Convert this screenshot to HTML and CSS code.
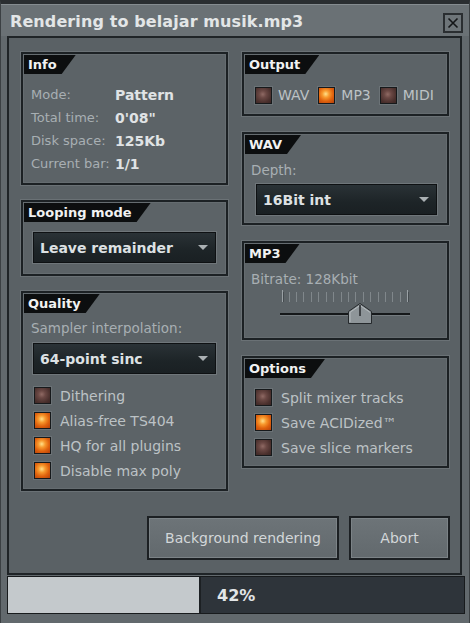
FILE: index.html
```html
<!DOCTYPE html>
<html>
<head>
<meta charset="utf-8">
<link rel="stylesheet" href="styles.css">
</head>
<body>
<div class="window">
  <div class="titlebar">
    <span class="title">Rendering to belajar musik.mp3</span>
    <span class="close"><svg width="16" height="16" viewBox="0 0 16 16"><path d="M3.5 3.5 L12.5 12.5 M12.5 3.5 L3.5 12.5" stroke="#141618" stroke-width="1.6" fill="none"/></svg></span>
  </div>
  <div class="frame">
    <div class="columns">
      <div class="col col-left">
        <section class="panel panel-info">
          <div class="tab">Info</div>
          <div class="info-grid">
            <span class="lbl">Mode:</span><span class="val">Pattern</span>
            <span class="lbl">Total time:</span><span class="val">0'08"</span>
            <span class="lbl">Disk space:</span><span class="val">125Kb</span>
            <span class="lbl">Current bar:</span><span class="val">1/1</span>
          </div>
        </section>
        <section class="panel panel-loop">
          <div class="tab">Looping mode</div>
          <div class="select select-left">Leave remainder<span class="arrow"></span></div>
        </section>
        <section class="panel panel-quality">
          <div class="tab">Quality</div>
          <div class="field-label ql">Sampler interpolation:</div>
          <div class="select select-left">64-point sinc<span class="arrow"></span></div>
          <ul class="checklist ql-list">
            <li><span class="cb"></span>Dithering</li>
            <li><span class="cb on"></span>Alias-free TS404</li>
            <li><span class="cb on"></span>HQ for all plugins</li>
            <li><span class="cb on"></span>Disable max poly</li>
          </ul>
        </section>
      </div>
      <div class="col col-right">
        <section class="panel panel-output">
          <div class="tab">Output</div>
          <div class="out-row">
            <span class="out-item"><span class="cb"></span>WAV</span>
            <span class="out-item"><span class="cb on"></span>MP3</span>
            <span class="out-item"><span class="cb"></span>MIDI</span>
          </div>
        </section>
        <section class="panel panel-wav">
          <div class="tab">WAV</div>
          <div class="field-label wl">Depth:</div>
          <div class="select select-wav">16Bit int<span class="arrow"></span></div>
        </section>
        <section class="panel panel-mp3">
          <div class="tab">MP3</div>
          <div class="field-label wl">Bitrate: 128Kbit</div>
          <svg class="slider" width="136" height="40" viewBox="0 0 136 40">
            <g stroke-width="1">
              <line x1="4.5" y1="2" x2="4.5" y2="14" stroke="#9aa1a5"/>
              <line x1="11.5" y1="4" x2="11.5" y2="14" stroke="#80878b"/>
              <line x1="18.5" y1="4" x2="18.5" y2="14" stroke="#80878b"/>
              <line x1="25.5" y1="4" x2="25.5" y2="14" stroke="#80878b"/>
              <line x1="33.5" y1="4" x2="33.5" y2="14" stroke="#80878b"/>
              <line x1="40.5" y1="4" x2="40.5" y2="14" stroke="#80878b"/>
              <line x1="48.5" y1="4" x2="48.5" y2="14" stroke="#80878b"/>
              <line x1="55.5" y1="4" x2="55.5" y2="14" stroke="#80878b"/>
              <line x1="63.5" y1="4" x2="63.5" y2="14" stroke="#80878b"/>
              <line x1="70.5" y1="4" x2="70.5" y2="14" stroke="#80878b"/>
              <line x1="77.5" y1="4" x2="77.5" y2="14" stroke="#80878b"/>
              <line x1="85.5" y1="4" x2="85.5" y2="14" stroke="#80878b"/>
              <line x1="92.5" y1="4" x2="92.5" y2="14" stroke="#80878b"/>
              <line x1="100.5" y1="4" x2="100.5" y2="14" stroke="#80878b"/>
              <line x1="107.5" y1="4" x2="107.5" y2="14" stroke="#80878b"/>
              <line x1="114.5" y1="4" x2="114.5" y2="14" stroke="#80878b"/>
              <line x1="122.5" y1="4" x2="122.5" y2="14" stroke="#80878b"/>
              <line x1="129.5" y1="2" x2="129.5" y2="14" stroke="#9aa1a5"/>
            </g>
            <g stroke-width="1">
              <line x1="5.5" y1="4" x2="5.5" y2="14" stroke="#454b4f"/>
              <line x1="130.5" y1="4" x2="130.5" y2="14" stroke="#454b4f"/>
            </g>
            <rect x="2" y="25" width="130" height="2" fill="#15181a"/>
            <rect x="2" y="27" width="130" height="1" fill="#747b7f"/>
            <path d="M70.5 35.5 L70.5 23.5 L82 15.5 L93.5 23.5 L93.5 35.5 Z" fill="#8e9599" stroke="#25292c" stroke-width="1"/>
            <path d="M72 34 L72 24.3 L82 17.4 L92 24.3" fill="none" stroke="#b4babd" stroke-width="1"/>
            <line x1="82" y1="17" x2="82" y2="28" stroke="#25292c" stroke-width="1.5"/>
          </svg>
        </section>
        <section class="panel panel-options">
          <div class="tab">Options</div>
          <ul class="checklist op-list">
            <li><span class="cb"></span>Split mixer tracks</li>
            <li><span class="cb on"></span>Save ACIDized™</li>
            <li><span class="cb"></span>Save slice markers</li>
          </ul>
        </section>
      </div>
    </div>
    <div class="buttons">
      <button class="btn btn-bg">Background rendering</button>
      <button class="btn btn-abort">Abort</button>
    </div>
  </div>
  <div class="progress">
    <div class="fill" style="width:193px"></div>
    <span class="pct">42%</span>
  </div>
</div>
</body>
</html>
```
FILE: styles.css
```css
* { box-sizing: border-box; }
html, body { margin: 0; padding: 0; }
body {
  background: #5f666a;
  font-family: "DejaVu Sans", Verdana, sans-serif;
}
.window {
  width: 470px;
  height: 623px;
  background: #62696d;
  border-top: 4px solid #2a2e31;
  border-left: 1px solid #3b4043;
  border-right: 1px solid #3b4043;
  overflow: hidden;
}
.titlebar {
  height: 32px;
  display: flex;
  justify-content: space-between;
  align-items: flex-start;
  padding: 0 6px 0 9px;
  background: #6a7175;
  border-top: 1px solid #858c90;
}
.title {
  font-weight: bold;
  font-size: 16px;
  color: #e3e6e7;
  line-height: 18px;
  margin-top: 8px;
  letter-spacing: 0.1px;
}
.close {
  width: 20px;
  height: 20px;
  margin-top: 8px;
  border: 2px solid #2a2e31;
  background: #6e7579;
  display: flex;
  align-items: center;
  justify-content: center;
}
.close svg { display: block; }
.frame {
  margin-left: 6px;
  width: 455px;
  height: 539px;
  border: 2px solid #1f2427;
  background: #5a6165;
  padding: 14px 9px 13px 12px;
  display: flex;
  flex-direction: column;
}
.columns {
  display: flex;
  gap: 14px;
  height: 439px;
}
.col {
  width: 207px;
  display: flex;
  flex-direction: column;
}
.col-left { gap: 15px; }
.col-right { gap: 16px; }
.panel {
  border: 2px solid #1c2124;
  background: #5c6367;
  box-shadow: 0 0 0 1px #6a7175, inset 0 0 0 1px #656c70;
  padding: 1px;
}
.panel-info { height: 133px; }
.panel-loop { height: 76px; }
.panel-quality { height: 200px; }
.panel-output { height: 64px; }
.panel-wav { height: 93px; }
.panel-mp3 { height: 99px; }
.panel-options { height: 112px; }
.tab {
  display: inline-block;
  height: 19px;
  line-height: 19px;
  background: #0c0e0f;
  color: #f1f2f2;
  font-weight: bold;
  font-size: 13px;
  padding: 0 19px 0 4px;
  clip-path: polygon(0 0, 100% 0, calc(100% - 14px) 100%, 0 100%);
  vertical-align: top;
}
.info-grid {
  display: grid;
  grid-template-columns: 84px auto;
  grid-auto-rows: 23px;
  align-items: center;
  padding: 9px 0 0 7px;
}
.lbl {
  font-size: 13px;
  color: #a8afb3;
}
.val {
  font-size: 14px;
  font-weight: bold;
  color: #e0e3e5;
}
.select {
  height: 31px;
  border: 1px solid #0e1113;
  box-shadow: 0 0 0 1px #6f767a;
  background: linear-gradient(#2a3236, #1d2427 60%, #1a2023);
  color: #dde1e3;
  font-weight: bold;
  font-size: 14px;
  display: flex;
  align-items: center;
  justify-content: space-between;
  padding: 0 7px 0 6px;
}
.select-left { width: 183px; margin-left: 9px; }
.panel-loop .select { margin-top: 10px; }
.select-wav { width: 181px; margin-left: 11px; margin-top: 6px; }
.arrow {
  width: 0;
  height: 0;
  border-left: 5px solid transparent;
  border-right: 5px solid transparent;
  border-top: 5px solid #aab0b3;
}
.field-label {
  font-size: 13.5px;
  color: #a8afb3;
  line-height: 16px;
}
.ql { margin: 7px 0 7px 7px; line-height: 16px; }
.wl { margin: 8px 0 0 6px; }
.checklist {
  list-style: none;
  margin: 0;
  padding: 0;
}
.checklist li {
  display: flex;
  align-items: center;
  height: 25px;
  font-size: 14px;
  color: #bcc2c5;
}
.ql-list { margin-top: 9px; padding-left: 10px; }
.op-list { margin-top: 7px; padding-left: 10px; }
.checklist .cb { margin-right: 9px; }
.cb {
  display: inline-block;
  width: 17px;
  height: 17px;
  flex: none;
  border: 1px solid #16191b;
  box-shadow: 0 0 0 1px #6b7276;
  background: radial-gradient(circle at 45% 42%, #8f6a64 0, #6a4844 30%, #4a302d 70%, #3a2524 100%);
}
.cb.on {
  background: radial-gradient(circle at 45% 40%, #ffe08a 0, #f89a2e 28%, #e0620d 60%, #b4400a 100%);
}
.out-row {
  display: flex;
  align-items: center;
  height: 20px;
  margin-top: 11px;
  padding-left: 10px;
}
.out-item {
  display: flex;
  align-items: center;
  font-size: 14px;
  color: #bcc2c5;
  margin-right: 9px;
}
.out-item .cb { margin-right: 6px; }
.slider {
  display: block;
  margin: 1px 0 0 33px;
}
.buttons {
  display: flex;
  justify-content: flex-end;
  gap: 10px;
  margin-top: 25px;
  padding-right: 1px;
}
.btn {
  height: 44px;
  border: 2px solid #1c2023;
  background: linear-gradient(#6d7478, #62696d);
  box-shadow: inset 0 0 0 1px #7c8387;
  color: #d3d7d9;
  font-family: "DejaVu Sans", Verdana, sans-serif;
  font-size: 14px;
  padding: 0;
}
.btn-bg { width: 192px; }
.btn-abort { width: 101px; }
.progress {
  margin-left: 6px;
  margin-top: 1px;
  width: 458px;
  height: 38px;
  border: 1px solid #181b1d;
  background: #2e343a;
  display: flex;
  align-items: center;
}
.fill {
  height: 100%;
  background: #c4c9cc;
  border-right: 2px solid #1c2023;
}
.pct {
  padding-left: 16px;
  font-weight: bold;
  font-size: 16px;
  color: #e2e5e7;
}
```
